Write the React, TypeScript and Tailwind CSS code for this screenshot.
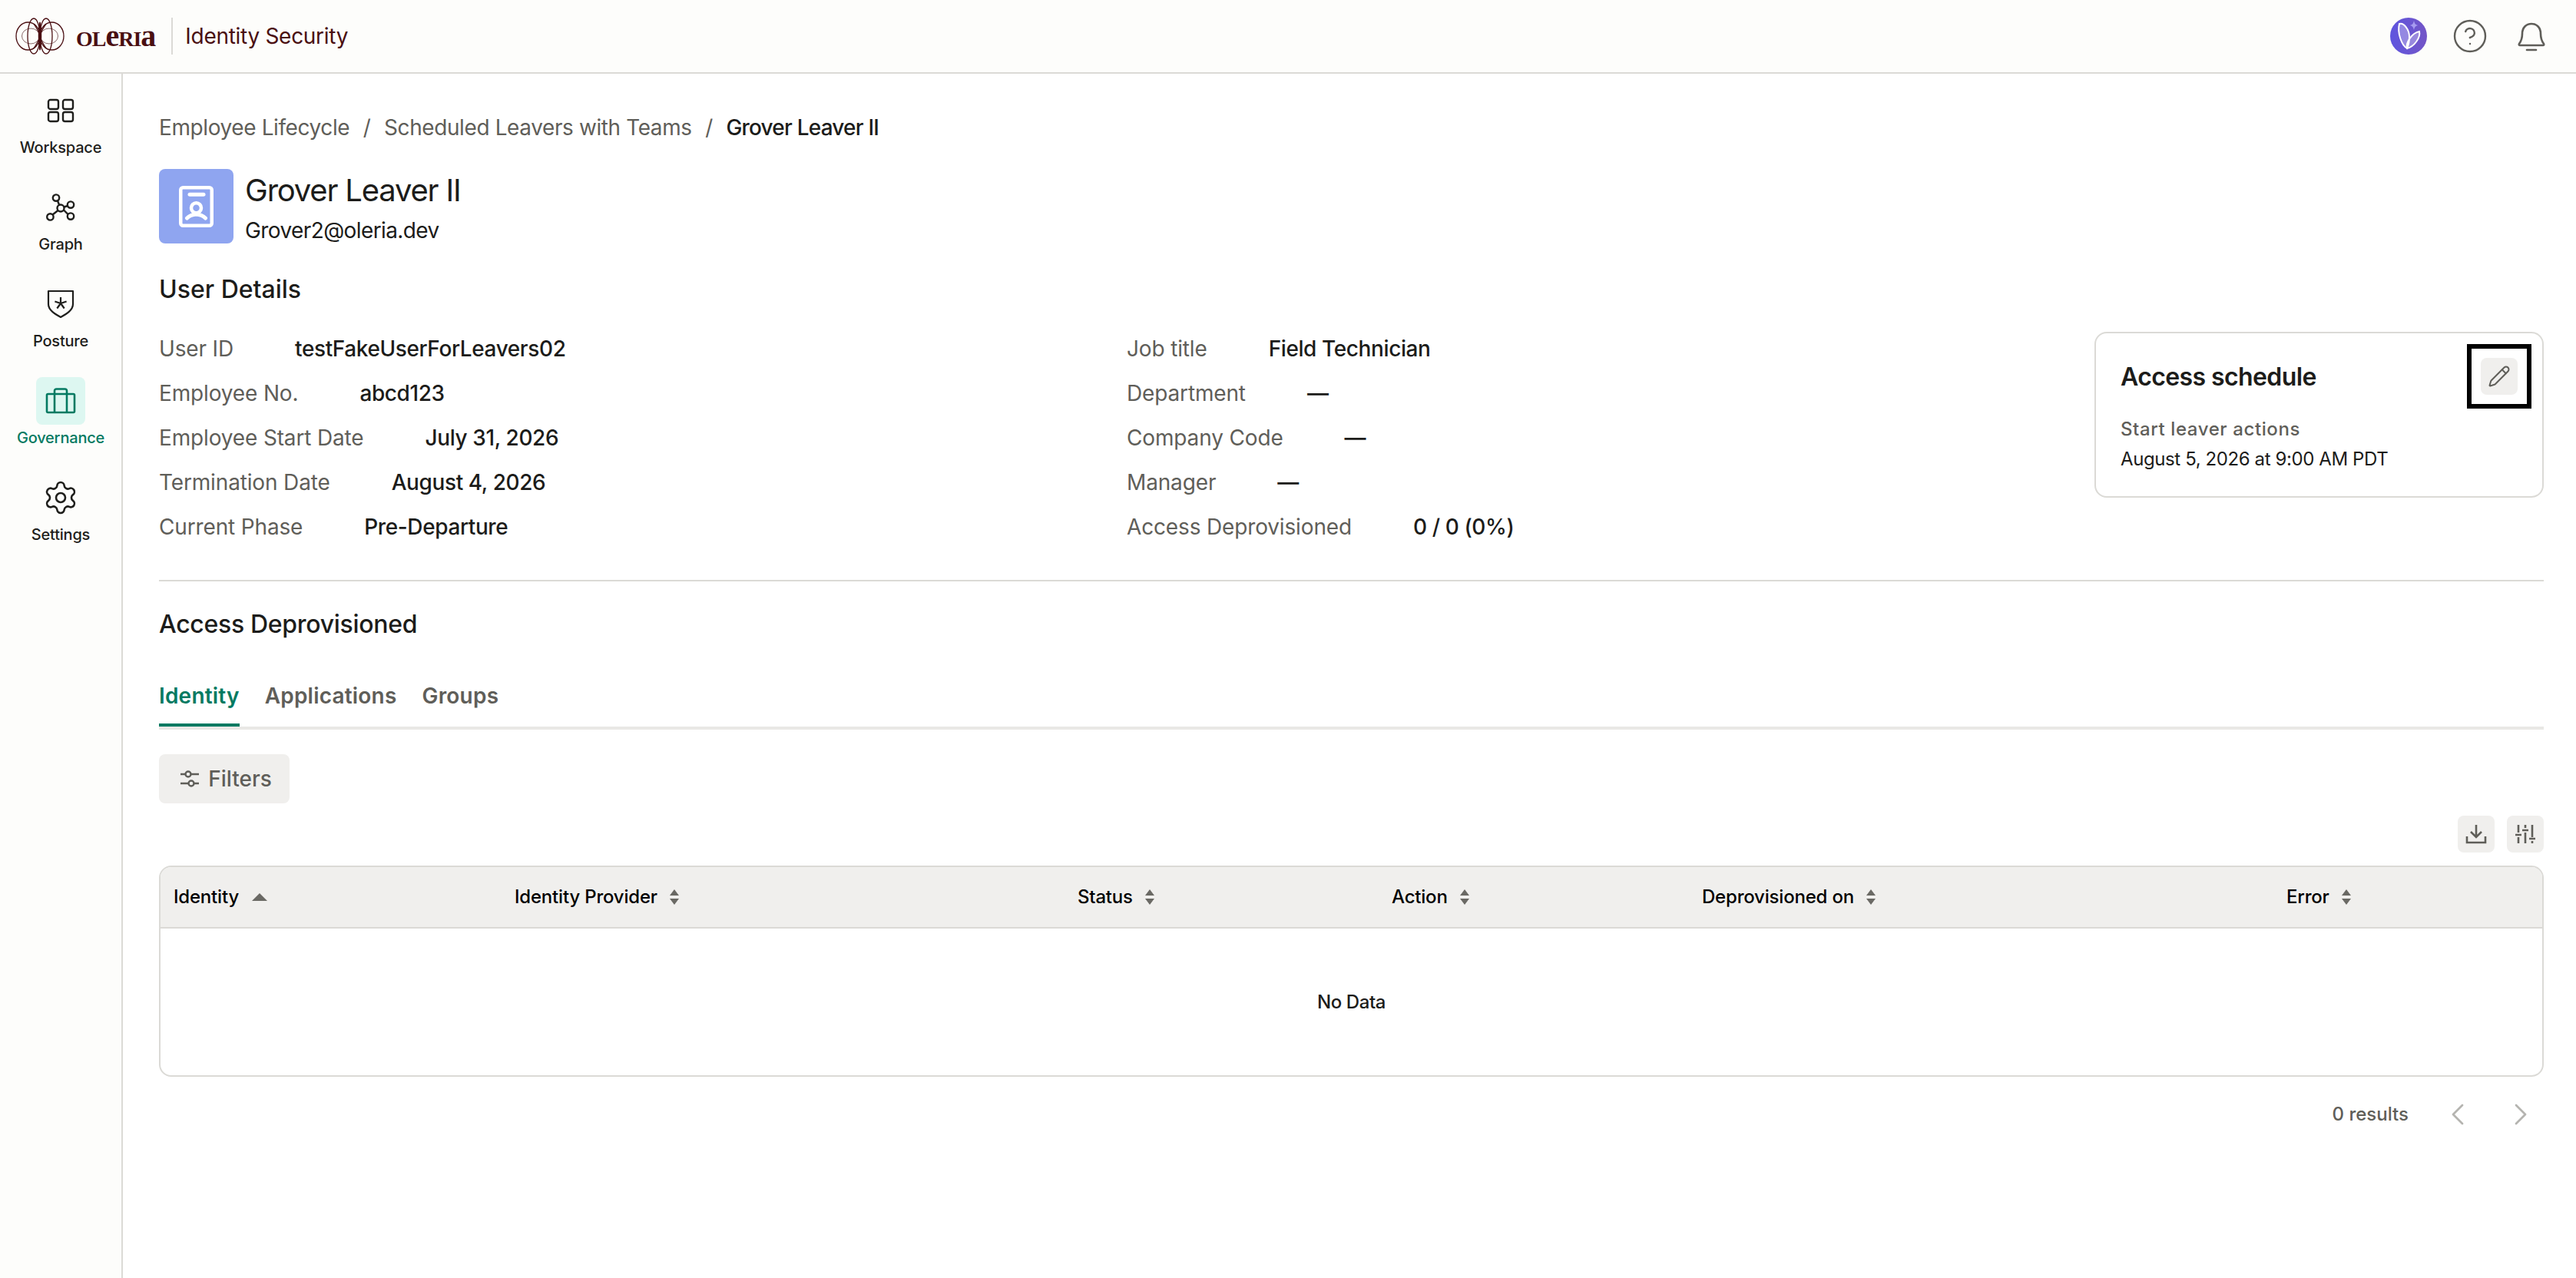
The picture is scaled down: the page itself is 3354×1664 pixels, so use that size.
import { ChevronLeft, ChevronRight, CircleHelp, Pencil, Settings } from "lucide-react";
import type { ReactNode } from "react";

function LogoMark() {
  return (
    <svg width="64" height="48" viewBox="0 0 64 48" fill="none" stroke="#4a0f12" strokeWidth="1.3">
      <ellipse cx="16.5" cy="24" rx="15.5" ry="18" />
      <ellipse cx="47.5" cy="24" rx="15.5" ry="18" />
      <ellipse cx="20" cy="24" rx="11.5" ry="10" stroke="#8a6a6b" strokeWidth="1" />
      <ellipse cx="44" cy="24" rx="11.5" ry="10" stroke="#8a6a6b" strokeWidth="1" />
      <ellipse cx="24" cy="24" rx="8" ry="23" />
      <ellipse cx="40" cy="24" rx="8" ry="23" />
      <path d="M32 6 C30 16 30 32 32 42 C34 32 34 16 32 6Z" fill="#4a0f12" strokeWidth="1.5" />
      <path d="M24 8 C28 14 30 18 32 22 C34 18 36 14 40 8 M24 40 C28 34 30 30 32 26 C34 30 36 34 40 40" />
    </svg>
  );
}

function AssistantBadge() {
  return (
    <div className="flex h-12 w-12 items-center justify-center rounded-full bg-gradient-to-r from-[#5f55df] to-[#7355c6]">
      <svg width="48" height="48" viewBox="0 0 48 48" fill="none">
        <path d="M12 8 C18 6 25 16 25 25 C25 31 24 36 22 40 C15 36 9 20 12 8Z" fill="#ffffff" fillOpacity="0.3" stroke="#fff" strokeWidth="2" />
        <path d="M38 18 C40 26 31 38 22 40 C20 33 28 20 38 18Z" fill="#ffffff" fillOpacity="0.3" stroke="#fff" strokeWidth="2" />
        <path d="M31 4 C32 8 33 9 36 10 C33 11 32 12 31 16 C30 12 29 11 26 10 C29 9 30 8 31 4Z" fill="#a79bf0" />
      </svg>
    </div>
  );
}

function BellIcon() {
  return (
    <svg width="40" height="40" viewBox="0 0 40 40" fill="none" stroke="#5f5e59" strokeWidth="2.6" strokeLinecap="round" strokeLinejoin="round">
      <path d="M8 17 C8 9 13 4 20 4 C27 4 32 9 32 17 C32 23 33 26 36 30 C36.5 31.5 36 32 35 32 L5 32 C4 32 3.5 31.5 4 30 C7 26 8 23 8 17Z" />
      <path d="M14 38 L26 38" />
    </svg>
  );
}

function WorkspaceIcon() {
  return (
    <svg width="36" height="32" viewBox="0 0 36 32" fill="none" stroke="#1f1f1c" strokeWidth="2.4">
      <rect x="2" y="2" width="13" height="12" rx="2.5" />
      <rect x="21" y="2" width="13" height="12" rx="2.5" />
      <rect x="2" y="18" width="13" height="12" rx="2.5" />
      <rect x="21" y="18" width="13" height="12" rx="2.5" />
    </svg>
  );
}

function GraphIcon() {
  return (
    <svg width="38" height="36" viewBox="0 0 38 36" fill="none" stroke="#1f1f1c" strokeWidth="2.4">
      <circle cx="19" cy="19" r="4.5" />
      <circle cx="13" cy="5.6" r="4.2" />
      <circle cx="32" cy="14.6" r="4.2" />
      <circle cx="32" cy="29.6" r="4.2" />
      <circle cx="5.4" cy="30.4" r="4.2" />
      <path d="M15 9.5 L17 14.5 M23.5 17.5 L28 16 M23 21.5 L28.5 27 M15.5 22 L8.5 27.5" />
    </svg>
  );
}

function ShieldIcon() {
  return (
    <svg width="36" height="38" viewBox="0 0 36 38" fill="none" stroke="#1f1f1c" strokeWidth="2.2" strokeLinejoin="round">
      <path d="M2 2 H34 V19 C34 27 25 32 18 36 C11 32 2 27 2 19 Z" />
      <path d="M18 18 V10 M18 18 L25.6 15.5 M18 18 L22.7 24.5 M18 18 L13.3 24.5 M18 18 L10.4 15.5" strokeWidth="2.2" />
    </svg>
  );
}

function BriefcaseIcon() {
  return (
    <svg width="40" height="34" viewBox="0 0 40 34" fill="none" stroke="#047a62" strokeWidth="2.6" strokeLinejoin="round">
      <rect x="2" y="8" width="36" height="24" rx="1.5" />
      <path d="M12 32 V4 C12 2.5 13 1.5 14.5 1.5 H25.5 C27 1.5 28 2.5 28 4 V32" />
    </svg>
  );
}

function NavItem({ icon, label, active }: { icon: ReactNode; label: string; active?: boolean }) {
  return (
    <div className="flex h-[126px] flex-col items-center">
      <div className={`flex h-[62px] w-16 items-center justify-center rounded-lg ${active ? "bg-[#ddf7f1]" : ""}`}>
        {icon}
      </div>
      <span className={`mt-[3px] text-[20px] leading-[28px] font-medium tracking-[-0.2px] ${active ? "text-[#047a62]" : "text-[#1f1f1c]"}`}>
        {label}
      </span>
    </div>
  );
}

function Detail({ label, value }: { label: string; value: string }) {
  return (
    <div className="flex h-[58px] items-center gap-[80px] text-[28px]">
      <span className="tracking-[-0.15px] text-[#5f5e59]">{label}</span>
      <span className="font-medium tracking-[-0.4px] text-[#1c1c1a]">{value}</span>
    </div>
  );
}

function SortIcon() {
  return (
    <svg width="12" height="22" viewBox="0 0 12 22" fill="#6a6964">
      <path d="M6 1 L12 9 H0 Z" />
      <path d="M6 21 L0 13 H12 Z" />
    </svg>
  );
}

function HeaderCell({ label, up }: { label: string; up?: boolean }) {
  return (
    <div className="flex items-center gap-[16px]">
      <span className="text-[24px] font-medium tracking-[-0.2px] text-black">{label}</span>
      {up ? (
        <svg width="22" height="12" viewBox="0 0 22 12" fill="#6a6964"><path d="M11 1 L21 11 H1 Z" /></svg>
      ) : (
        <SortIcon />
      )}
    </div>
  );
}

export default function App() {
  const left = [
    ["User ID", "testFakeUserForLeavers02"],
    ["Employee No.", "abcd123"],
    ["Employee Start Date", "July 31, 2026"],
    ["Termination Date", "August 4, 2026"],
    ["Current Phase", "Pre-Departure"],
  ];
  const right = [
    ["Job title", "Field Technician"],
    ["Department", "—"],
    ["Company Code", "—"],
    ["Manager", "—"],
    ["Access Deprovisioned", "0 / 0 (0%)"],
  ];

  return (
    <div className="flex h-screen w-full flex-col overflow-hidden bg-white font-['Inter',sans-serif]">
      <header className="flex h-[96px] shrink-0 items-center justify-between border-b-2 border-[#dbdad6] bg-[#fdfdfb] pr-[38px] pl-[20px]">
        <div className="flex items-center">
          <LogoMark />
          <span className="ml-[15px] flex items-baseline font-['Liberation_Serif',serif] text-[28px] leading-none font-bold tracking-[-1px] text-[#4a0f12]">
            OL<span className="text-[40px]">e</span>RI<span className="text-[40px]">a</span>
          </span>
          <div className="mr-[16px] ml-[21px] h-[48px] w-[2px] bg-[#dbdad6]" />
          <span className="text-[28px] tracking-[-0.3px] text-[#4a0f12]">Identity Security</span>
        </div>
        <div className="flex items-center gap-[32px]">
          <AssistantBadge />
          <CircleHelp size={48} strokeWidth={1.2} className="text-[#5f5e59]" />
          <div className="ml-[4px]">
            <BellIcon />
          </div>
        </div>
      </header>

      <div className="flex flex-1">
        <aside className="w-[160px] shrink-0 border-r-2 border-[#dbdad6] bg-[#fdfdfb] pt-[17px]">
          <NavItem icon={<WorkspaceIcon />} label="Workspace" />
          <NavItem icon={<GraphIcon />} label="Graph" />
          <NavItem icon={<ShieldIcon />} label="Posture" />
          <NavItem icon={<BriefcaseIcon />} label="Governance" active />
          <NavItem icon={<Settings size={48} strokeWidth={1.3} className="text-[#1f1f1c]" />} label="Settings" />
        </aside>

        <main className="flex-1 pt-[50px] pr-[42px] pl-[47px]">
          <nav className="flex h-[40px] items-center gap-[17.5px] text-[28px] tracking-[-0.4px] text-[#5f5e59]">
            <span>Employee Lifecycle</span>
            <span>/</span>
            <span>Scheduled Leavers with Teams</span>
            <span>/</span>
            <span className="font-medium tracking-[-0.8px] text-[#1c1c1a]">Grover Leaver II</span>
          </nav>

          <div className="mt-[34px] flex h-[97px] items-start gap-[15px]">
            <div className="flex h-[97px] w-[97px] items-center justify-center rounded-lg bg-[#8fa5f0]">
              <svg width="45" height="54" viewBox="0 0 45 54" fill="none" stroke="#fff">
                <rect x="2.25" y="2.25" width="40.5" height="49.5" rx="3" strokeWidth="4.5" />
                <rect x="11.5" y="8.7" width="23" height="5" rx="2.5" fill="#fff" stroke="none" />
                <circle cx="22.5" cy="28.7" r="6.5" strokeWidth="4.5" />
                <path d="M10.5 42 Q15 37.5 22.5 37 Q30 37.5 34.5 42" strokeWidth="5" strokeLinecap="round" />
              </svg>
            </div>
            <div className="flex flex-col pt-[2px]">
              <h1 className="text-[40px] leading-[52px] tracking-[-1.2px] text-[#1c1c1a]">Grover Leaver II</h1>
              <p className="mt-[6px] text-[28px] leading-[40px] tracking-[-0.6px] text-[#1c1c1a]">Grover2@oleria.dev</p>
            </div>
          </div>

          <h2 className="mt-[40px] text-[32px] leading-[40px] font-medium text-[#1c1c1a]">User Details</h2>

          <div className="mt-[28px] flex">
            <div className="w-[1260px]">
              {left.map(([label, value]) => (
                <Detail key={label} label={label} value={value} />
              ))}
            </div>
            <div className="w-[1260px]">
              {right.map(([label, value]) => (
                <Detail key={label} label={label} value={value} />
              ))}
            </div>
            <section className="mt-[7px] flex h-[216px] flex-1 flex-col rounded-2xl border-2 border-[#dbdad6] pt-[14px] pr-[14px] pl-[32px]">
              <div className="flex items-center justify-between">
                <h3 className="pt-[2px] text-[32px] font-semibold tracking-[-0.6px] text-[#1c1c1a]">Access schedule</h3>
                <div className="flex h-[84px] w-[84px] items-center justify-center border-[6px] border-black">
                  <button className="flex h-12 w-12 items-center justify-center rounded-lg bg-[#f0efed]">
                    <Pencil size={30} strokeWidth={1.6} className="text-[#5f5e59]" />
                  </button>
                </div>
              </div>
              <p className="mt-[10px] text-[24px] leading-[34px] font-medium tracking-[0.6px] text-[#5f5e59]">Start leaver actions</p>
              <p className="mt-[5px] text-[24px] leading-[34px] tracking-[-0.4px] text-[#1c1c1a]">August 5, 2026 at 9:00 AM PDT</p>
            </section>
          </div>

          <div className="mt-[40px] h-[2px] bg-[#dbdad6]" />

          <h2 className="mt-[36px] text-[32px] leading-[40px] font-medium tracking-[-0.3px] text-[#1c1c1a]">Access Deprovisioned</h2>

          <div className="mt-[53px] flex gap-[33px] border-b-4 border-[#e9e8e5] text-[28px] font-semibold tracking-[0.2px] text-[#5f5e59]">
            <div className="h-[60px] border-b-4 border-[#047a62] leading-[40px] text-[#047a62]">Identity</div>
            <div className="h-[60px] leading-[40px]">Applications</div>
            <div className="h-[60px] leading-[40px]">Groups</div>
          </div>

          <button className="mt-[32px] flex h-[64px] w-[170px] items-center justify-center gap-[10px] rounded-lg bg-[#f0efed] pl-[3px] text-[28px] font-medium text-[#5f5e59]">
            <svg width="28" height="26" viewBox="0 0 28 26" fill="none" stroke="#5f5e59" strokeWidth="2.4">
              <path d="M2 7 H8 M16 7 H26 M2 19 H12 M20 19 H26" />
              <circle cx="12" cy="7" r="3.5" />
              <circle cx="16" cy="19" r="3.5" />
            </svg>
            Filters
          </button>

          <div className="mt-[16px] flex justify-end gap-[16px]">
            <button className="flex h-12 w-12 items-center justify-center rounded-lg bg-[#f0efed]">
              <svg width="28" height="28" viewBox="0 0 28 28" fill="none" stroke="#5f5e59" strokeWidth="2.6">
                <path d="M14 2 V17 M7 11 L14 18 L21 11" />
                <path d="M2 17 V25 H26 V17" />
              </svg>
            </button>
            <button className="flex h-12 w-12 items-center justify-center rounded-lg bg-[#f0efed]">
              <svg width="28" height="28" viewBox="0 0 28 28" fill="none" stroke="#5f5e59" strokeWidth="2.6">
                <path d="M5 2 V12 M5 18 V26 M14 2 V6 M14 12 V26 M23 2 V18 M23 23 V26" />
                <path d="M1 15 H9 M10 9 H18 M19 20 H27" />
              </svg>
            </button>
          </div>

          <div className="mt-[17px] overflow-hidden rounded-2xl border-2 border-[#dbdad6]">
            <div className="grid h-[80px] grid-cols-[444px_733px_409px_404px_761px_1fr] items-center border-b-2 border-[#dbdad6] bg-[#f0efed] pl-[17px]">
              <HeaderCell label="Identity" up />
              <HeaderCell label="Identity Provider" />
              <HeaderCell label="Status" />
              <HeaderCell label="Action" />
              <HeaderCell label="Deprovisioned on" />
              <HeaderCell label="Error" />
            </div>
            <div className="flex h-[191px] items-center justify-center text-[24px] font-medium tracking-[-0.4px] text-[#1c1c1a]">
              No Data
            </div>
          </div>

          <div className="mt-[29px] flex h-[40px] items-center justify-end pr-[6px]">
            <span className="text-[24px] font-medium text-[#5f5e59]">0 results</span>
            <ChevronLeft size={48} strokeWidth={1.4} className="ml-[40px] text-[#b5b4b0]" />
            <ChevronRight size={48} strokeWidth={1.4} className="ml-[34px] text-[#b5b4b0]" />
          </div>
        </main>
      </div>
    </div>
  );
}
